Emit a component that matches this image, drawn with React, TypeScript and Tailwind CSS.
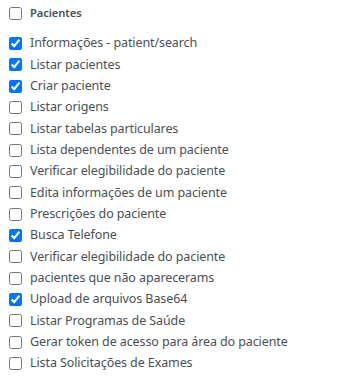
const items: { label: string; checked: boolean }[] = [
  { label: "Informações - patient/search", checked: true },
  { label: "Listar pacientes", checked: true },
  { label: "Criar paciente", checked: true },
  { label: "Listar origens", checked: false },
  { label: "Listar tabelas particulares", checked: false },
  { label: "Lista dependentes de um paciente", checked: false },
  { label: "Verificar elegibilidade do paciente", checked: false },
  { label: "Edita informações de um paciente", checked: false },
  { label: "Prescrições do paciente", checked: false },
  { label: "Busca Telefone", checked: true },
  { label: "Verificar elegibilidade do paciente", checked: false },
  { label: "pacientes que não aparecerams", checked: false },
  { label: "Upload de arquivos Base64", checked: true },
  { label: "Listar Programas de Saúde", checked: false },
  { label: "Gerar token de acesso para área do paciente", checked: false },
  { label: "Lista Solicitações de Exames", checked: false },
];

export default function App() {
  return (
    <div className="w-[362px] h-[380px] bg-white text-[#495057] font-['Noto_Sans',sans-serif] pl-[9px]">
      {/* grupo */}
      <label className="flex items-center gap-2 h-[26px] pt-px">
        <input type="checkbox" className="w-[13px] h-[13px] m-0" readOnly />
        <span className="text-[11.2px] font-semibold tracking-[-0.1px]">Pacientes</span>
      </label>

      <div className="flex flex-col mt-[7px]">
        {items.map((it, i) => (
          <label key={i} className="flex items-center gap-2 h-[21.33px]">
            <input type="checkbox" className="w-[13px] h-[13px] m-0" defaultChecked={it.checked} />
            <span className="text-[12.5px] tracking-[-0.1px] leading-none whitespace-nowrap">{it.label}</span>
          </label>
        ))}
      </div>
    </div>
  );
}
